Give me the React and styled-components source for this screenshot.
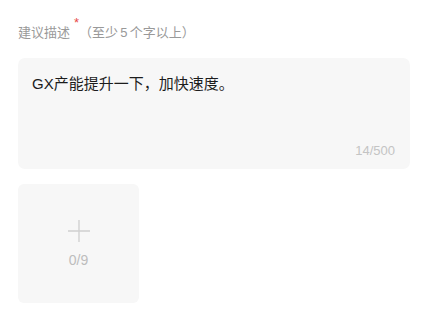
import React from "react";
import styled, { createGlobalStyle } from "styled-components";

const GlobalStyle = createGlobalStyle`
  html, body {
    margin: 0;
    padding: 0;
    background: #fff;
    font-family: "Liberation Sans", "Noto Sans CJK SC", sans-serif;
  }
`;

const Page = styled.div`
  width: 428px;
  height: 321px;
  box-sizing: border-box;
  padding: 24px 18px 0;
  display: flex;
  flex-direction: column;
`;

const Label = styled.div`
  font-size: 13px;
  line-height: 18px;
  color: #999;
  display: flex;
  align-items: flex-start;
`;

const Required = styled.span`
  color: #e84a4a;
  font-size: 13px;
  line-height: 10px;
  margin: -6px 0 0 4px;
`;

const TextBox = styled.div`
  margin-top: 16px;
  height: 111px;
  box-sizing: border-box;
  background: #f7f7f7;
  border-radius: 7px;
  padding: 16px 15px 10px 14px;
  display: flex;
  flex-direction: column;
`;

const Content = styled.div`
  flex: 1;
  font-size: 15px;
  line-height: 20px;
  color: #1c1c1c;
`;

const Counter = styled.div`
  align-self: flex-end;
  font-size: 13px;
  line-height: 16px;
  color: #c4c4c4;
`;

const Upload = styled.div`
  margin-top: 15px;
  width: 121px;
  height: 119px;
  border-radius: 6px;
  background: #f7f7f7;
  display: flex;
  flex-direction: column;
  align-items: center;
  justify-content: center;
  gap: 9px;
`;

const UploadCount = styled.div`
  font-size: 14px;
  line-height: 16px;
  color: #bdbdbd;
`;

const PlusIcon = () => (
  <svg width="24" height="24" viewBox="0 0 24 24" fill="none" stroke="#cfcfcf" strokeWidth="1.3">
    <path d="M12 1v22M1 12h22" />
  </svg>
);

export default function App() {
  return (
    <>
      <GlobalStyle />
      <Page>
        <Label>
          建议描述<Required>*</Required>
          <span>（至少{"\u2006"}5{"\u2006"}个字以上）</span>
        </Label>
        <TextBox>
          <Content>GX产能提升一下，加快速度。</Content>
          <Counter>14/500</Counter>
        </TextBox>
        <Upload>
          <PlusIcon />
          <UploadCount>0/9</UploadCount>
        </Upload>
      </Page>
    </>
  );
}
